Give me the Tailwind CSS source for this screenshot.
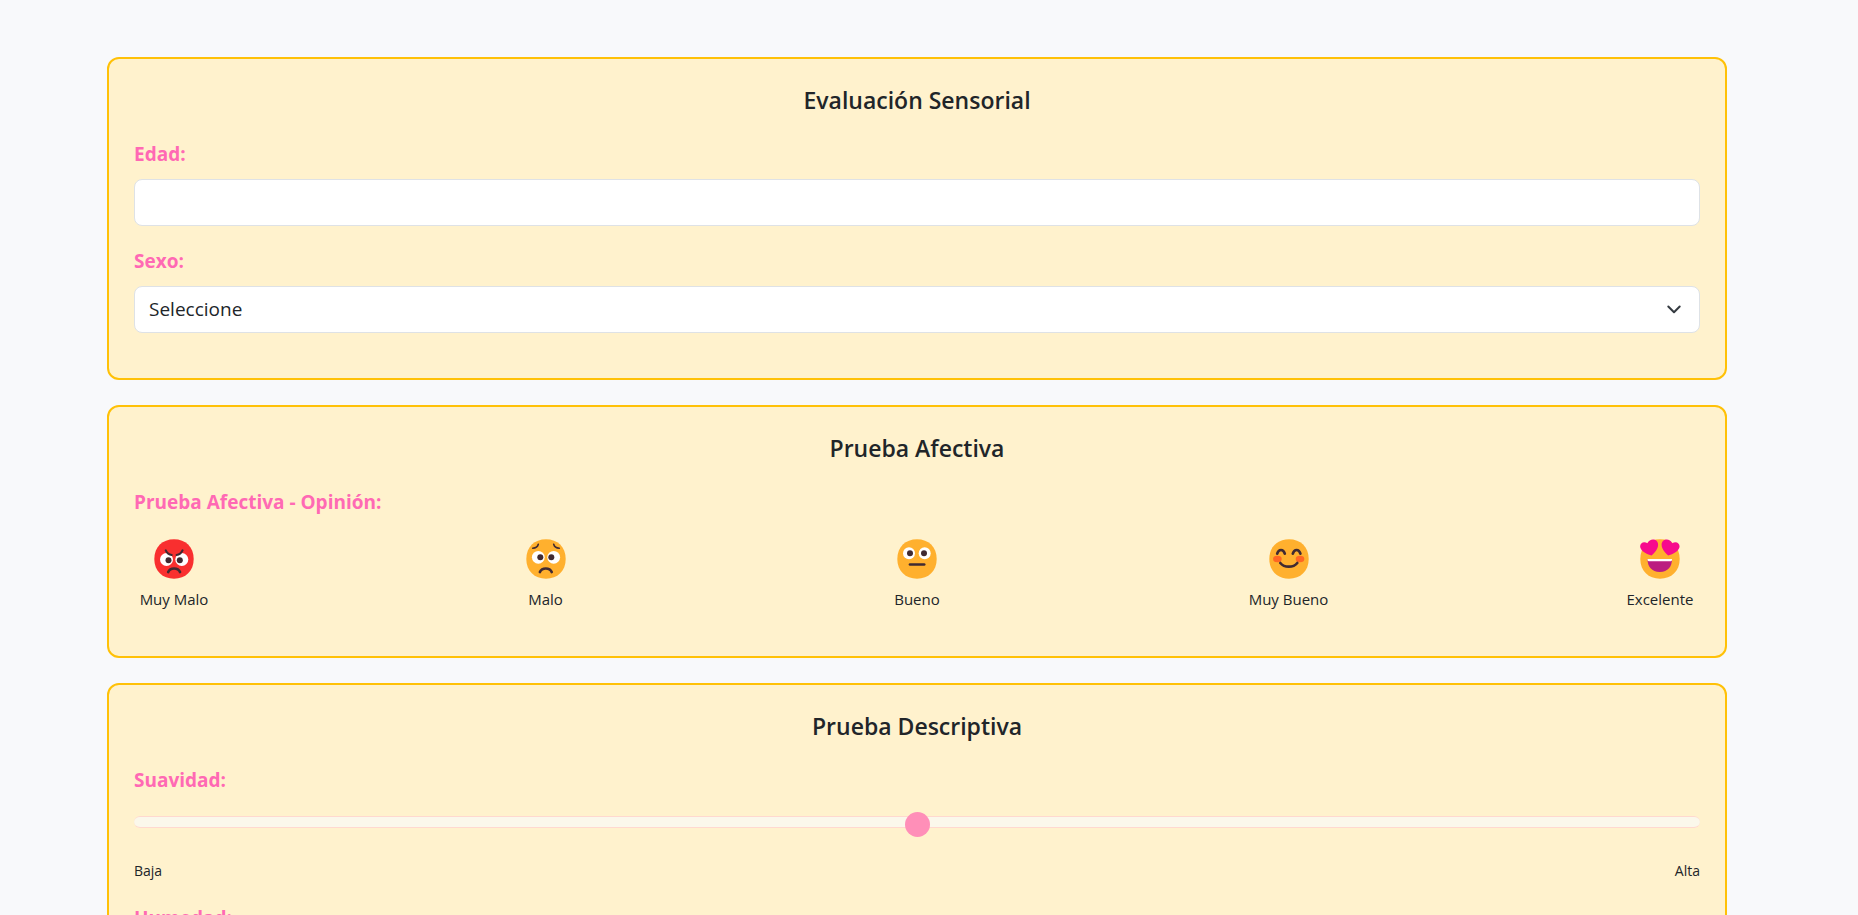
<!DOCTYPE html>
<html lang="es">
<head>
<meta charset="utf-8">
<meta name="viewport" content="width=device-width, initial-scale=1">
<title>Evaluación Sensorial</title>
<script src="https://cdn.jsdelivr.net/npm/@tailwindcss/browser@4"></script>
</head>
<body class="bg-[#f8f9fb] font-['Open_Sans','Noto_Sans',sans-serif] text-[#212529]">
<svg class="hidden">
  <symbol id="face" viewBox="0 0 40 40"><path d="M20 0.300C31.500 0.300 39.700 8 39.700 20S31.500 39.700 20 39.700S0.300 32 0.300 20S8.500 0.300 20 0.300Z"/></symbol>
</svg>
<main class="py-[57px] pr-6">
  <form class="mx-auto flex w-full max-w-[1620px] flex-col gap-[25px]">
    <section class="rounded-xl border-2 border-[#ffc107] bg-[#fff2cd] px-[25px] pt-[25px] pb-[45px]">
      <h2 class="mb-6 pt-px text-center text-[23px]/[30px] font-semibold">Evaluación Sensorial</h2>
      <label for="edad" class="mb-2.5 block text-[19px]/[30px] font-bold text-[#ff69b4]">Edad:</label>
      <input id="edad" type="text" class="mb-5 block h-[47px] w-full rounded-lg border border-[#dee2e6] bg-white px-[15px] text-[19px]">
      <label for="sexo" class="mb-2.5 block text-[19px]/[30px] font-bold text-[#ff69b4]">Sexo:</label>
      <div class="relative">
        <select id="sexo" class="block h-[47px] w-full appearance-none rounded-lg border border-[#dee2e6] bg-white pr-12 pl-[14px] text-[19px]">
          <option>Seleccione</option>
        </select>
        <svg class="pointer-events-none absolute top-[13px] right-4 size-5" viewBox="0 0 20 20" fill="none" stroke="#343a40" stroke-width="2" stroke-linecap="round" stroke-linejoin="round"><path d="m4.300 7.500 5.700 5.700 5.700-5.700"/></svg>
      </div>
    </section>

    <section class="rounded-xl border-2 border-[#ffc107] bg-[#fff2cd] px-[25px] pt-[25px] pb-[45px]">
      <h2 class="mb-6 pt-px text-center text-[23px]/[30px] font-semibold">Prueba Afectiva</h2>
      <h3 class="text-[19px]/[30px] font-bold text-[#ff69b4]">Prueba Afectiva - Opinión:</h3>
      <div class="flex justify-between pt-[22px] text-[15px]/[24px]">
        <button type="button" class="flex w-20 flex-col items-center gap-2 whitespace-nowrap">
          <svg class="size-10" viewBox="0 0 40 40" fill="none" stroke-linecap="round">
            <use href="#face" fill="#f92f2f"/>
            <circle cx="12.500" cy="20.500" r="6.500" fill="#fff"/><circle cx="27.800" cy="20.500" r="6.500" fill="#fff"/>
            <path d="M8 10 19 17.500V12ZM32 10 21 17.500V12Z" fill="#f92f2f"/>
            <circle cx="14.500" cy="21.300" r="3" fill="#402a32"/><circle cx="25.800" cy="21.300" r="3" fill="#402a32"/>
            <path d="M11.700 11.300q2 4.200 6 4.700M28.600 11.300q-2 4.200-6 4.700" stroke="#402a32" stroke-width="2"/>
            <path d="M14.200 33q1.500-3.500 5.900-3.500T26 33" stroke="#402a32" stroke-width="2.700"/>
          </svg>Muy Malo</button>
        <button type="button" class="flex w-20 flex-col items-center gap-2 whitespace-nowrap">
          <svg class="size-10" viewBox="0 0 40 40" fill="none" stroke-linecap="round">
            <use href="#face" fill="#ffb02e"/>
            <circle cx="12.300" cy="18.300" r="6.400" fill="#fff"/><circle cx="27.700" cy="18.300" r="6.400" fill="#fff"/>
            <circle cx="14.300" cy="18.300" r="3" fill="#402a32"/><circle cx="25.300" cy="18.300" r="3" fill="#402a32"/>
            <path d="M6.700 9.200q4.600-.2 5.600-4M33.300 9.200q-4.600-.2-5.600-4" stroke="#402a32" stroke-width="1.600"/>
            <path d="M13.900 33q1.500-3.500 5.900-3.500t5.900 3.500" stroke="#402a32" stroke-width="2.700"/>
          </svg>Malo</button>
        <button type="button" class="flex w-20 flex-col items-center gap-2 whitespace-nowrap">
          <svg class="size-10" viewBox="0 0 40 40" fill="none" stroke-linecap="round">
            <use href="#face" fill="#ffb02e"/>
            <circle cx="12" cy="14.300" r="6" fill="#fff"/><circle cx="27.700" cy="14.300" r="6" fill="#fff"/>
            <circle cx="13" cy="14.300" r="3" fill="#402a32"/><circle cx="27" cy="14.300" r="3" fill="#402a32"/>
            <path d="M13 25.500h14.200" stroke="#402a32" stroke-width="2.700"/>
          </svg>Bueno</button>
        <button type="button" class="flex w-20 flex-col items-center gap-2 whitespace-nowrap">
          <svg class="size-10" viewBox="0 0 40 40" fill="none" stroke-linecap="round">
            <use href="#face" fill="#ffb02e"/>
            <ellipse cx="8.400" cy="20" rx="4.300" ry="3.200" fill="#ff6723"/><ellipse cx="31" cy="20" rx="4.300" ry="3.200" fill="#ff6723"/>
            <path d="M8.200 14.700q1-3.700 3.800-3.700t3.800 3.700M23.800 14.700q1-3.700 3.800-3.700t3.800 3.700M11.300 24q3 3.700 8.500 3.700t8.500-3.700" stroke="#402a32" stroke-width="2.700"/>
          </svg>Muy Bueno</button>
        <button type="button" class="flex w-20 flex-col items-center gap-2 whitespace-nowrap">
          <svg class="size-10" viewBox="0 0 40 40">
            <use href="#face" fill="#ffb02e"/>
            <path d="M7.500 20H32C32 27.500 28 33 19.800 33S7.500 27.500 7.500 20Z" fill="#bb1d80"/>
            <path d="M7.500 20H32V21Q31.800 22.300 30.600 22.300H9Q7.800 22.300 7.500 21Z" fill="#fff"/>
            <path id="heart" d="M11.500 16.500C8 15.500 1.500 13 .3 8.500C-.7 4.500 3.500 1.500 7.500 4.300C9 .8 12.500-.2 15.300 1C18.500 2.500 18.700 6.500 17.200 9.500C16 12 13.800 14.800 11.500 16.500Z" fill="#f70a8d"/>
            <use href="#heart" transform="matrix(-1 0 0 1 39.700 0)"/>
          </svg>Excelente</button>
      </div>
    </section>

    <section class="rounded-xl border-2 border-[#ffc107] bg-[#fff2cd] px-[25px] pt-[25px] pb-[45px]">
      <h2 class="mb-6 pt-px text-center text-[23px]/[30px] font-semibold">Prueba Descriptiva</h2>
      <label for="suavidad" class="block text-[19px]/[30px] font-bold text-[#ff69b4]">Suavidad:</label>
      <input id="suavidad" type="range" min="0" max="10" value="5" class="mt-3 block h-[30px] w-full appearance-none bg-transparent [&::-webkit-slider-runnable-track]:h-3 [&::-webkit-slider-runnable-track]:rounded-full [&::-webkit-slider-runnable-track]:border-y [&::-webkit-slider-runnable-track]:border-[#ffd9cf] [&::-webkit-slider-runnable-track]:bg-[#fbf8eb] [&::-webkit-slider-thumb]:-mt-[5px] [&::-webkit-slider-thumb]:size-[25px] [&::-webkit-slider-thumb]:appearance-none [&::-webkit-slider-thumb]:rounded-full [&::-webkit-slider-thumb]:bg-[#ff8fb8]">
      <div class="mt-6 mb-[22px] flex justify-between text-sm/[20px]"><span>Baja</span><span>Alta</span></div>
      <label for="humedad" class="block text-[19px]/[30px] font-bold text-[#ff69b4]">Humedad:</label>
      <input id="humedad" type="range" min="0" max="10" value="5" class="mt-3 block h-[30px] w-full appearance-none bg-transparent [&::-webkit-slider-runnable-track]:h-3 [&::-webkit-slider-runnable-track]:rounded-full [&::-webkit-slider-runnable-track]:border-y [&::-webkit-slider-runnable-track]:border-[#ffd9cf] [&::-webkit-slider-runnable-track]:bg-[#fbf8eb] [&::-webkit-slider-thumb]:-mt-[5px] [&::-webkit-slider-thumb]:size-[25px] [&::-webkit-slider-thumb]:appearance-none [&::-webkit-slider-thumb]:rounded-full [&::-webkit-slider-thumb]:bg-[#ff8fb8]">
    </section>
  </form>
</main>
</body>
</html>
